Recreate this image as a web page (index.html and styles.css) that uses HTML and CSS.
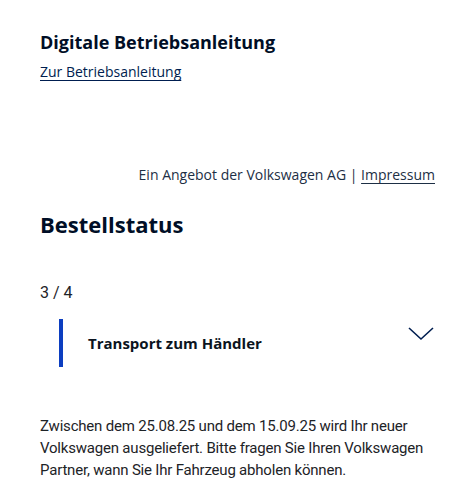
FILE: index.html
```html
<!DOCTYPE html>
<html lang="de">
<head>
    <meta charset="UTF-8">
    <meta name="viewport" content="width=device-width, initial-scale=1.0">
    <title>Bestellstatus</title>
    <link rel="stylesheet" href="styles.css">
</head>
<body>
    <div class="page">
        <div class="manual">
            <h2>Digitale Betriebsanleitung</h2>
            <a href="#" class="manual-link">Zur Betriebsanleitung</a>
        </div>

        <div class="provider">
            Ein Angebot der Volkswagen AG | <a href="#">Impressum</a>
        </div>

        <h1 class="status-title">Bestellstatus</h1>

        <div class="step-count">3 / 4</div>

        <div class="step">
            <div class="step-bar"></div>
            <div class="step-name">Transport zum Händler</div>
            <svg class="chevron" width="26" height="14" viewBox="0 0 26 14">
                <path d="M1 1 L13 12 L25 1" fill="none" stroke="#001e50" stroke-width="1.6"/>
            </svg>
        </div>

        <p class="step-text">
            Zwischen dem 25.08.25 und dem 15.09.25 wird Ihr neuer<br>
            Volkswagen ausgeliefert. Bitte fragen Sie Ihren Volkswagen<br>
            Partner, wann Sie Ihr Fahrzeug abholen können.
        </p>
    </div>
</body>
</html>
```

FILE: styles.css
```css
* {
    margin: 0;
    padding: 0;
    box-sizing: border-box;
}

body {
    font-family: 'Open Sans', 'Noto Sans', sans-serif;
    background: #fff;
    color: #1d2327;
}

.page {
    padding: 30px 40px 0 40px;
}

.manual h2 {
    font-size: 18px;
    font-weight: 700;
    line-height: 24px;
    color: #000e26;
}

.manual-link {
    display: inline-block;
    margin-top: 8px;
    font-size: 14px;
    line-height: 20px;
    color: #001e50;
    text-decoration: underline;
    text-underline-offset: 3px;
}

.provider {
    margin-top: 83px;
    text-align: right;
    font-size: 14px;
    line-height: 20px;
    color: #1d2f45;
}

.provider a {
    color: #1d2f45;
    text-decoration: underline;
    text-underline-offset: 3px;
}

.status-title {
    margin-top: 24px;
    font-size: 22px;
    font-weight: 700;
    line-height: 30px;
    color: #000e26;
}

.step-count {
    margin-top: 44px;
    font-family: Roboto, sans-serif;
    font-size: 16px;
    line-height: 20px;
    color: #1d2327;
}

.step {
    display: flex;
    align-items: center;
    margin-top: 16px;
    padding-left: 19px;
}

.step-bar {
    width: 4px;
    height: 48px;
    background: #0c3ec0;
}

.step-name {
    flex: 1;
    margin-left: 25px;
    font-size: 15px;
    font-weight: 700;
    color: #0b1420;
}

.chevron {
    align-self: flex-start;
    margin-top: 8px;
    margin-right: 1px;
}

.step-text {
    margin-top: 48px;
    font-family: Roboto, sans-serif;
    font-size: 15px;
    letter-spacing: -0.2px;
    line-height: 22px;
    white-space: nowrap;
    color: #1d2327;
}
```
